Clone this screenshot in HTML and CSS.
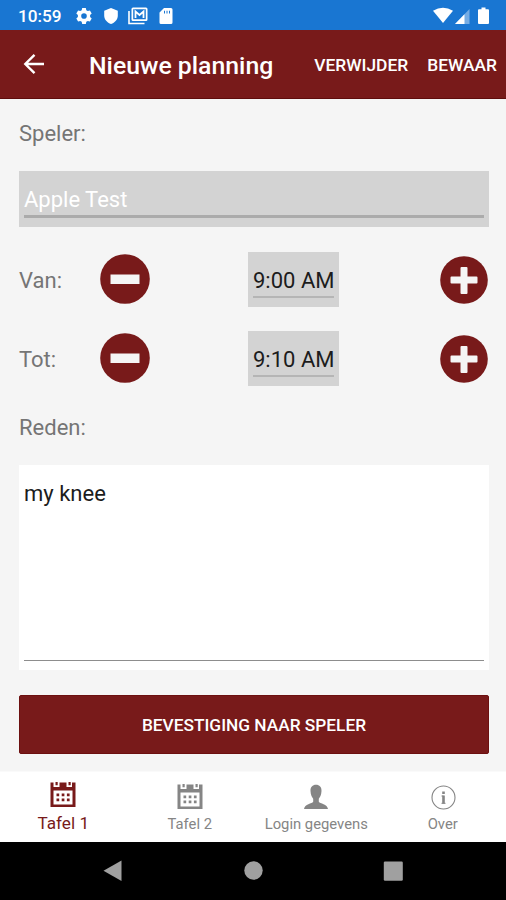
FILE: index.html
```html
<!DOCTYPE html>
<html lang="nl">
<head>
<meta charset="utf-8">
<title>Nieuwe planning</title>
<link rel="stylesheet" href="styles.css">
</head>
<body>
<div class="status">
  <span class="clock">10:59</span>
  <svg class="status-left" width="98" height="20" viewBox="0 0 98 20" fill="#fff">
    <path fill-rule="evenodd" d="M6.200 2h3.600l.5 2.200 1.500.9 2.100-.7 1.800 3-1.600 1.600v2l1.600 1.600-1.800 3-2.100-.7-1.500.9-.5 2.200H6.200l-.5-2.200-1.500-.9-2.100.7-1.800-3 1.600-1.600V9L.3 7.400l1.800-3 2.100.7 1.500-.9zM8 7.200a2.800 2.800 0 1 0 0 5.600a2.800 2.800 0 1 0 0-5.600z"/>
    <path d="M35 2l6.800 2.700v5c0 3.700-3 6.900-6.800 8.300-3.800-1.400-6.800-4.600-6.800-8.300v-5z"/>
    <path d="M53 5v12.500h15.500" fill="none" stroke="#fff" stroke-width="1.600"/>
    <path fill-rule="evenodd" d="M57 1.500h13q1.500 0 1.500 1.500v10.500q0 1.500-1.500 1.500H57q-1.500 0-1.500-1.500V3Q55.500 1.500 57 1.500zm.2 1.700v10.100h12.600V3.200z"/>
    <path d="M59.500 12V5.500l4 3.500 4-3.500V12" fill="none" stroke="#fff" stroke-width="1.800"/>
    <path fill-rule="evenodd" d="M88 2h7q1.500 0 1.500 1.500v13q0 1.500-1.500 1.500H85q-1.500 0-1.500-1.500v-10zm0 2.800v2.700h1V4.800zm2.500 0v2.700h1V4.800zm2.500 0v2.700h1V4.800z"/>
  </svg>
  <svg class="status-right" width="58" height="20" viewBox="0 0 58 20" fill="#fff">
    <path d="M0 4.800Q10 -1.200 20 4.800L10 17z"/>
    <path d="M36.500 3v15H22z" opacity=".4"/>
    <path d="M31.500 8.200V18H22z"/>
    <path d="M48.500 1.500h4v1.800H55q1 0 1 1V17q0 1-1 1h-9q-1 0-1-1V4.300q0-1 1-1h2.500z"/>
  </svg>
</div>
<header class="bar">
  <svg class="back" width="22" height="22" viewBox="0 0 22 22" fill="none" stroke="#fff" stroke-width="2.400"><path d="M21 11H3M11.500 1.800L2.300 11l9.200 9.200"/></svg>
  <h1 class="title">Nieuwe planning</h1>
  <span class="action">VERWIJDER</span>
  <span class="action">BEWAAR</span>
</header>
<main class="form">
  <div class="label speler">Speler:</div>
  <div class="field"><div class="value">Apple Test</div></div>
  <div class="row">
    <span class="label">Van:</span>
    <svg class="minus" width="50" height="50" viewBox="0 0 50 50"><circle cx="25" cy="25" r="24.800" fill="#781a1a"/><path d="M10.500 20.500h29v9.500h-29z" fill="#f5f5f5"/></svg>
    <div class="time"><div class="time-value">9:00 AM</div></div>
    <svg class="plus" width="48" height="48" viewBox="0 0 48 48"><circle cx="24" cy="24" r="23.800" fill="#781a1a"/><path d="M21.500 11h5q1 0 1 1v8.500h9q1 0 1 1v5q0 1-1 1h-9V37q0 1-1 1h-5q-1 0-1-1v-9.500h-9q-1 0-1-1v-5q0-1 1-1h9V12q0-1 1-1z" fill="#f5f5f5"/></svg>
  </div>
  <div class="row">
    <span class="label">Tot:</span>
    <svg class="minus" width="50" height="50" viewBox="0 0 50 50"><circle cx="25" cy="25" r="24.800" fill="#781a1a"/><path d="M10.500 20.500h29v9.500h-29z" fill="#f5f5f5"/></svg>
    <div class="time"><div class="time-value">9:10 AM</div></div>
    <svg class="plus" width="48" height="48" viewBox="0 0 48 48"><circle cx="24" cy="24" r="23.800" fill="#781a1a"/><path d="M21.500 11h5q1 0 1 1v8.500h9q1 0 1 1v5q0 1-1 1h-9V37q0 1-1 1h-5q-1 0-1-1v-9.500h-9q-1 0-1-1v-5q0-1 1-1h9V12q0-1 1-1z" fill="#f5f5f5"/></svg>
  </div>
  <div class="label reden">Reden:</div>
  <div class="notes"><div class="notes-value">my knee</div></div>
  <div class="submit">BEVESTIGING NAAR SPELER</div>
</main>
<nav class="tabs">
  <div class="tab active">
    <svg width="26" height="26" viewBox="0 0 26 26" fill="currentColor"><path fill-rule="evenodd" d="M.5 .5h3v4.500h6V.5h7v4.500h5.500V.5h3.500V25H.5zM3.500 8.500v14h19v-14z"/><path d="M5.500 0h2.200v3.200H5.500zM18.500 0h2.200v3.200h-2.200zM6.500 11.500h2.700v2.700H6.500zM11.700 11.500h2.700v2.700h-2.700zM16.900 11.500h2.700v2.700h-2.700zM6.500 16.500h2.700v2.700H6.500zM11.700 16.500h2.700v2.700h-2.700zM16.900 16.500h2.700v2.700h-2.700z"/></svg>
    <span>Tafel 1</span>
  </div>
  <div class="tab">
    <svg width="26" height="26" viewBox="0 0 26 26" fill="currentColor"><path fill-rule="evenodd" d="M.5 .5h3v4.500h6V.5h7v4.500h5.500V.5h3.500V25H.5zM3.500 8.500v14h19v-14z"/><path d="M5.500 0h2.200v3.200H5.500zM18.500 0h2.200v3.200h-2.200zM6.500 11.500h2.700v2.700H6.500zM11.700 11.500h2.700v2.700h-2.700zM16.900 11.500h2.700v2.700h-2.700zM6.500 16.500h2.700v2.700H6.500zM11.700 16.500h2.700v2.700h-2.700zM16.900 16.500h2.700v2.700h-2.700z"/></svg>
    <span>Tafel 2</span>
  </div>
  <div class="tab">
    <svg width="26" height="26" viewBox="0 0 26 26" fill="currentColor"><path d="M13 .8c3.500 0 5.700 2.300 5.500 6.200-.1 4-1.700 6.500-2.700 7.700v3c1 2 8.700 2.300 9.200 7.300H1c.5-5 8.200-5.300 9.200-7.300v-3C9.200 13.500 7.600 11 7.500 7 7.300 3.100 9.500.8 13 .8z"/></svg>
    <span>Login gegevens</span>
  </div>
  <div class="tab">
    <svg width="26" height="26" viewBox="0 0 26 26" fill="none" stroke="currentColor"><circle cx="13.500" cy="13.500" r="11.500" stroke-width="1.100"/><path d="M13.500 7.500v2.500M13.500 11.500v8" stroke-width="2.600"/><path d="M11.500 12h2M11.500 19.300h4" stroke-width="1"/></svg>
    <span>Over</span>
  </div>
</nav>
<div class="system">
  <svg width="20" height="22" viewBox="0 0 20 22"><path d="M18.500.5v20.500L.5 10.700z"/></svg>
  <svg width="20" height="22" viewBox="0 0 20 22"><circle cx="10.500" cy="10.500" r="9.200"/></svg>
  <svg width="20" height="22" viewBox="0 0 20 22"><rect x=".8" y="1.500" width="19" height="19.200" rx="1.200"/></svg>
</div>
</body>
</html>
```
FILE: styles.css
```css
* { box-sizing: border-box; }
body {
  margin: 0;
  width: 506px;
  height: 900px;
  display: flex;
  flex-direction: column;
  overflow: hidden;
  background: #f5f5f5;
  font-family: Roboto, "Liberation Sans", sans-serif;
  white-space: nowrap;
}
svg { display: block; flex: none; }
.status {
  height: 30px;
  flex: none;
  display: flex;
  align-items: center;
  padding: 1px 15px 0 18px;
  background: #1976d2;
  color: #fff;
}
.clock { width: 58px; font-size: 17.200px; font-weight: 500; line-height: 20px; }
.status-right { margin-left: auto; }
.bar {
  height: 69px;
  flex: none;
  display: flex;
  align-items: center;
  padding: 0 9px 0 23px;
  background: #781a1a;
  border-bottom: 1px solid #5f0d0d;
  color: #fff;
}
.title { margin: 4px auto 0 44px; font-size: 24.800px; font-weight: 500; line-height: 30px; }
.action { margin: 2px 0 0 19px; font-size: 17.400px; font-weight: 500; line-height: 20px; }
.form { height: 672px; flex: none; padding: 0 17px 0 19px; }
.label { color: #757575; font-size: 22px; line-height: 28px; }
.speler { padding-top: 21px; height: 72px; }
.field { height: 56px; margin-bottom: 25px; padding: 15px 5px 0; background: #d3d3d3; }
.value { height: 32px; border-bottom: 3px solid #ababab; color: #fff; font-size: 22px; line-height: 28px; }
.row { display: grid; grid-template-columns: 81px 148px 91px 1fr; height: 55px; margin-bottom: 25px; align-items: center; }
.row + .row { margin-top: -1px; }
.row .label { padding-top: 2px; }
.time { height: 55px; padding: 14px 5px 0; background: #d3d3d3; }
.time-value { height: 32px; border-bottom: 2px solid #b5b5b5; color: #1c1c1c; font-size: 22px; line-height: 29px; }
.minus { margin-bottom: 1px; }
.plus { justify-self: end; margin: 1px 1px 0 0; }
.reden { height: 54px; padding-top: 3px; }
.notes { height: 205px; padding: 14px 5px 9px; background: #fff; }
.notes-value { height: 182px; border-bottom: 1.500px solid #8d8d8d; color: #1c1c1c; font-size: 22px; line-height: 30px; }
.submit {
  height: 59px;
  margin-top: 25px;
  border: 1px solid #6c1010;
  border-radius: 2px;
  background: #781a1a;
  color: #fff;
  font-size: 17.300px;
  font-weight: 500;
  line-height: 59px;
  text-align: center;
}
.tabs {
  height: 71px;
  flex: none;
  display: grid;
  grid-template-columns: repeat(4, 1fr);
  background: #fff;
  border-top: 1px solid #fafafa;
}
.tab { display: flex; flex-direction: column; align-items: center; padding-top: 12px; color: #858585; font-size: 14.800px; line-height: 20px; }
.tab span { margin-top: 4px; }
.tab.active { padding-top: 10px; color: #781a1a; font-size: 17.200px; }
.tab.active span { margin-top: 5px; }
.system { height: 58px; flex: none; display: flex; justify-content: center; gap: 120px; padding-top: 18px; background: #000; fill: #a0a0a0; }
```
